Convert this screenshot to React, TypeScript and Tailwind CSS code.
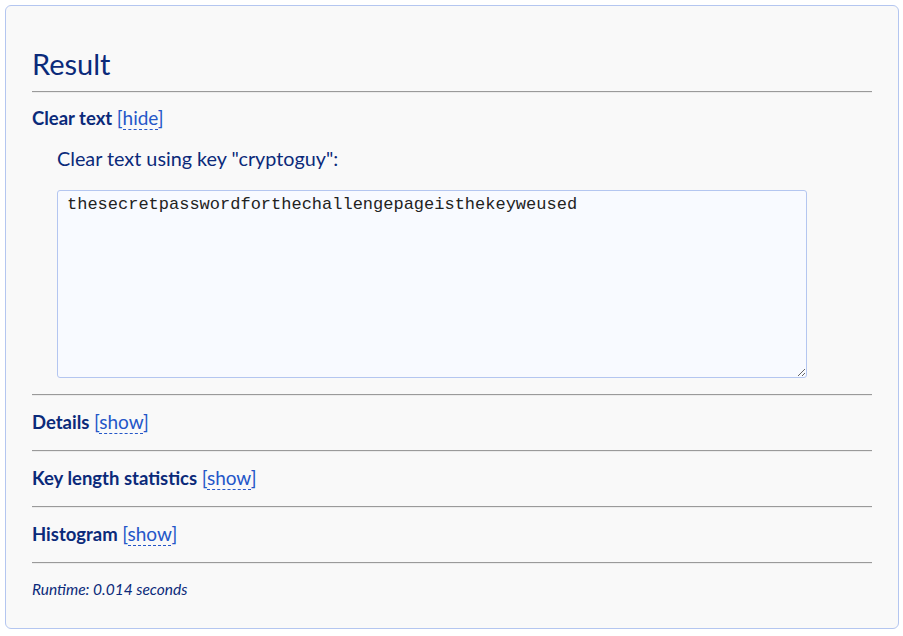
import React from "react";

const sections = ["Details", "Key length statistics", "Histogram"];

function Toggle({ label }: { label: string }) {
  return (
    <span className="text-[19px] font-normal text-[#2456c8]">
      [<span className="border-b border-dashed border-[#2456c8]">{label}</span>]
    </span>
  );
}

export default function App() {
  return (
    <div className="min-h-[636px] bg-white p-[5px] font-['Lato','Noto_Sans',sans-serif] text-[#0b2a7a]">
      <div className="h-[624px] w-[894px] rounded-[6px] border border-[#b4c6f0] bg-[#f9f9f9] px-[26px] pt-[38px]">
        <h2 className="text-[29px] leading-[40px]">Result</h2>
        <div className="mt-[7px] border-t border-b border-t-[#9a9a9a] border-b-[#ececec]" />

        <div className="pt-[10px]">
          <div className="text-[18.5px] font-bold leading-[30px]">
            Clear text <Toggle label="hide" />
          </div>
          <div className="pl-[25px] pt-[12px]">
            <p className="text-[19.8px] leading-[26px]">Clear text using key "cryptoguy":</p>
            <textarea
              readOnly
              defaultValue="thesecretpasswordforthechallengepageisthekeyweused"
              className="mt-[19px] block h-[188px] w-[750px] resize-y rounded-[3px] border border-[#b4c6f0] bg-[#f8faff] px-[9px] py-[4px] font-['Liberation_Mono',monospace] text-[17px] leading-[20px] text-[#222] outline-none"
            />
          </div>
        </div>

        <div className="mt-[16px] border-t border-b border-t-[#9a9a9a] border-b-[#ececec]" />
        {sections.map((s) => (
          <div key={s}>
            <div className="pt-[11px] pb-[13px] text-[18.5px] font-bold leading-[30px]">
              {s} <Toggle label="show" />
            </div>
            <div className="border-t border-b border-t-[#9a9a9a] border-b-[#ececec]" />
          </div>
        ))}

        <p className="pt-[15px] text-[15.5px] italic leading-[20px]">Runtime: 0.014 seconds</p>
      </div>
    </div>
  );
}
